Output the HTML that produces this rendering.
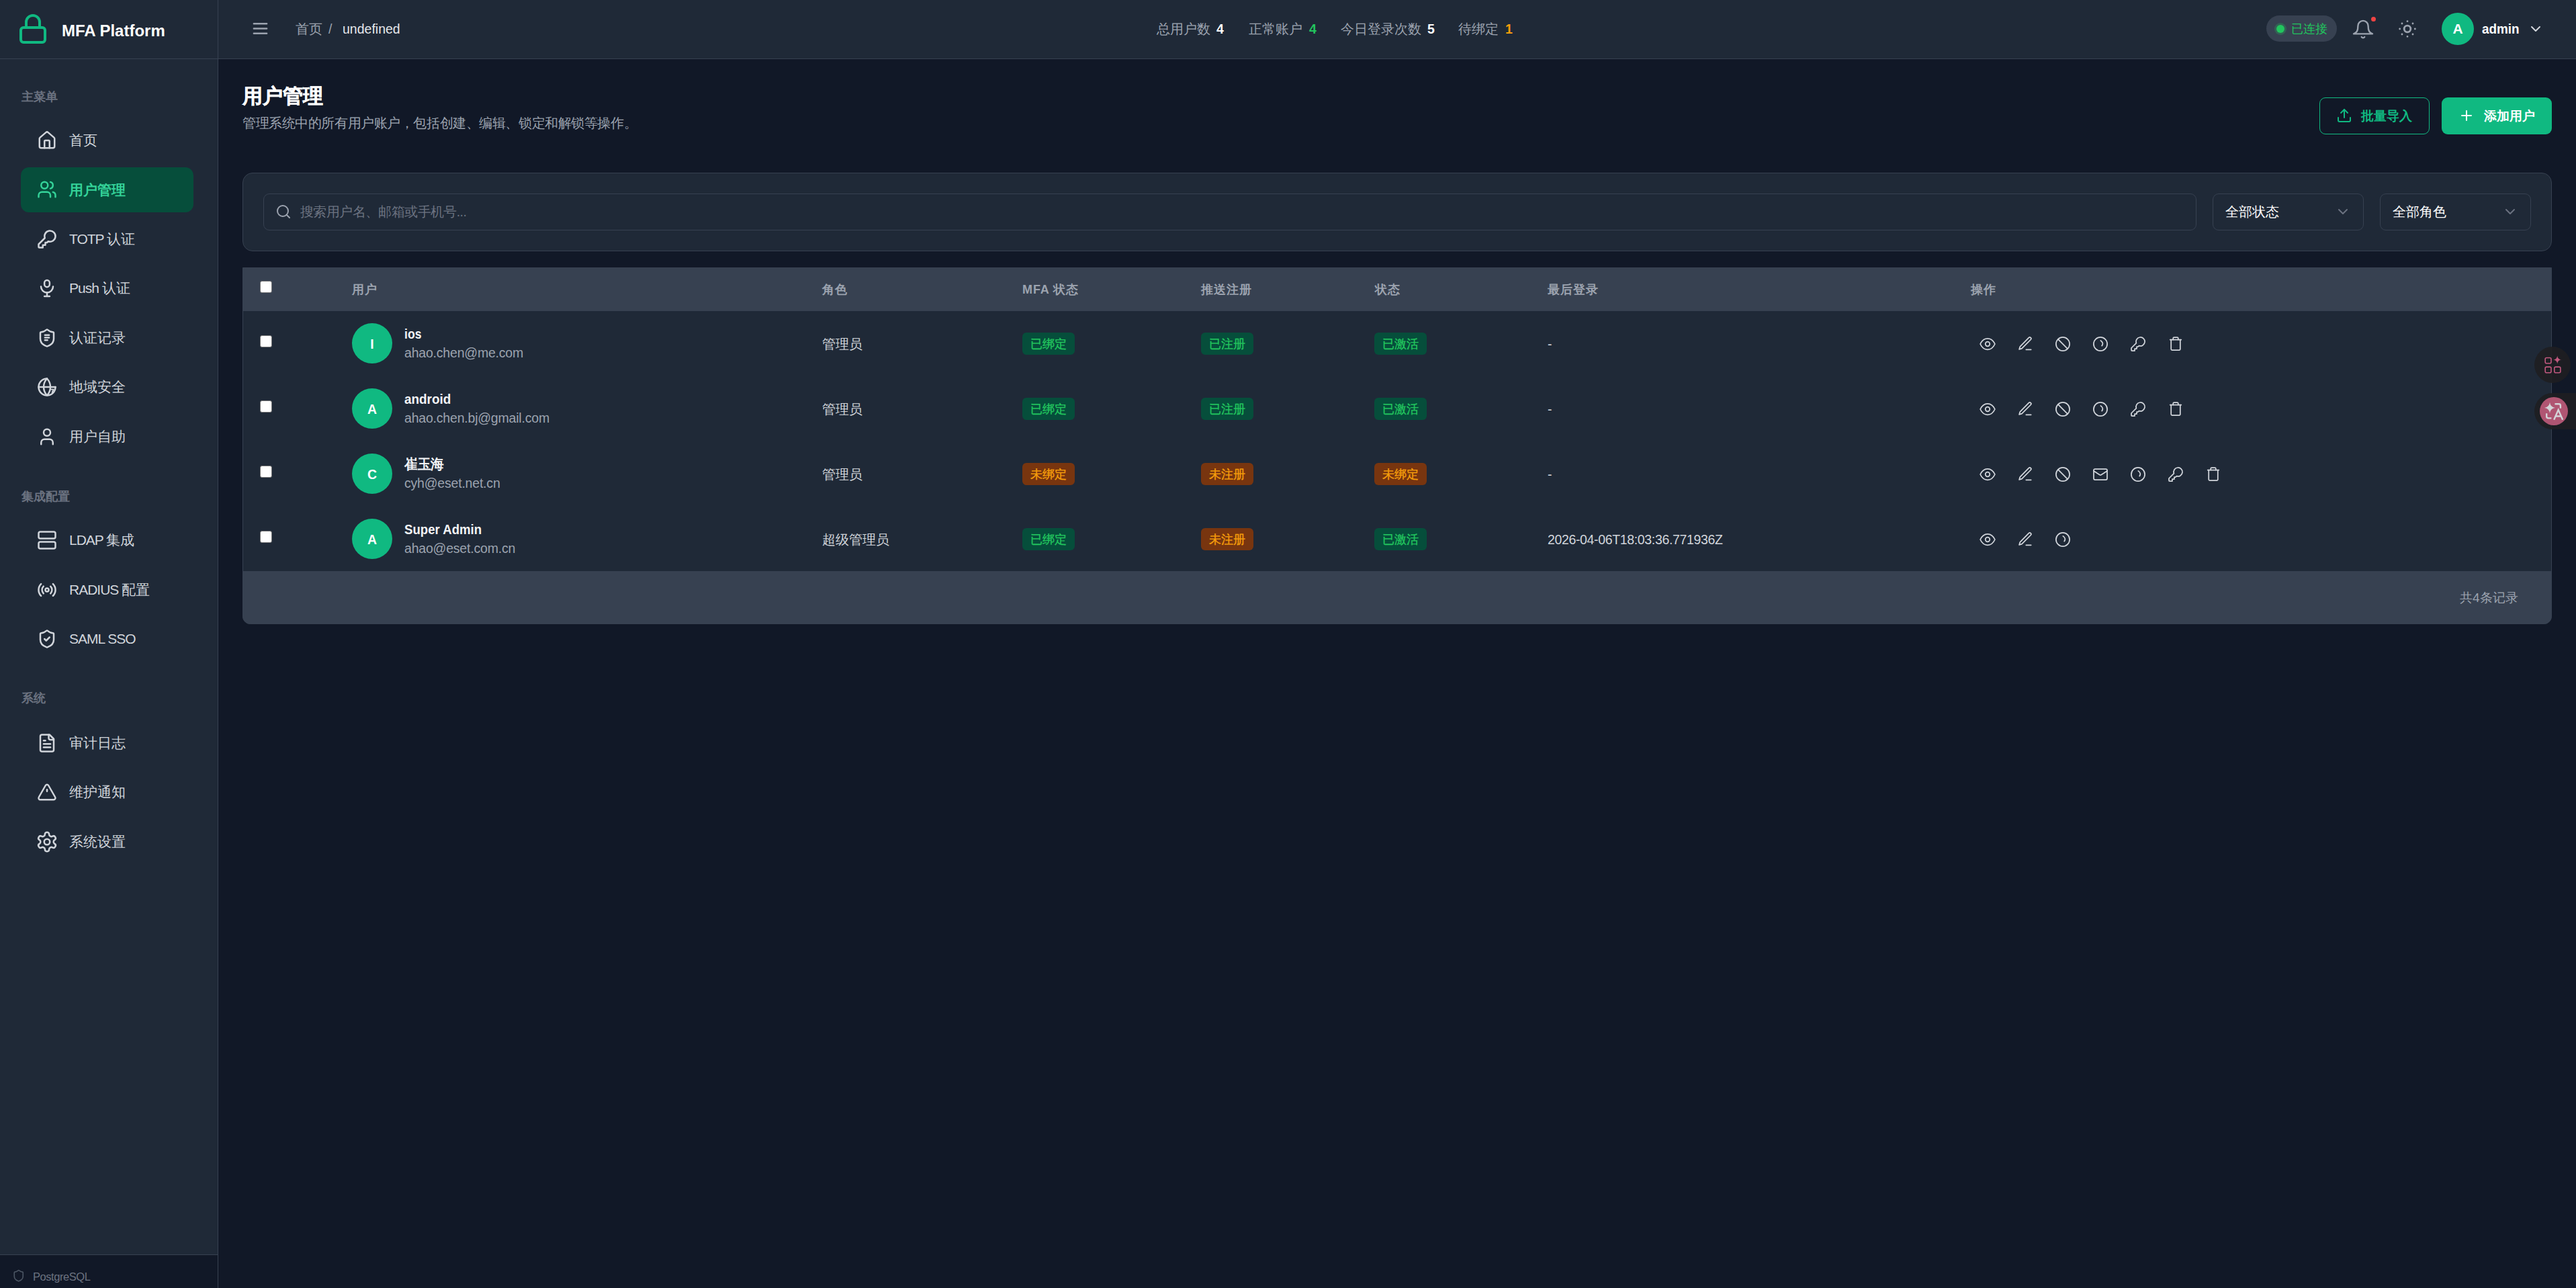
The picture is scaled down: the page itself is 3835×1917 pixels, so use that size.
<!DOCTYPE html>
<html><head><meta charset="utf-8">
<style>
*{box-sizing:border-box;margin:0;padding:0}
html,body{width:3835px;height:1917px;overflow:hidden;background:#111827;font-family:"Liberation Sans",sans-serif;color:#d1d5db}
.abs{position:absolute;white-space:nowrap}
svg{display:block;overflow:visible}
</style></head>
<body>

<div class="abs" style="left:0;top:0;width:325px;height:1917px;background:#1f2937;border-right:1px solid #374151"></div>
<div class="abs" style="left:0;top:87px;width:3835px;height:1px;background:#374151"></div>
<div class="abs" style="left:325px;top:0;width:3510px;height:87px;background:#1f2937"></div>

<svg class="abs" style="left:25px;top:19px" width="48" height="48" viewBox="0 0 24 24" fill="none" stroke="#10b981" stroke-width="2" stroke-linecap="round" stroke-linejoin="round"><rect x="3" y="11" width="18" height="11" rx="2"/><path d="M7 11V7a5 5 0 0 1 10 0v4"/></svg>
<div class="abs" style="left:92px;top:31.5px;font-size:24px;line-height:28px;color:#ffffff;font-weight:bold;">MFA Platform</div>
<div class="abs" style="left:32px;top:134px;font-size:18px;line-height:20px;color:#6b7280;font-weight:bold;">主菜单</div>
<svg class="abs" style="left:55px;top:193.5px" width="30" height="30" viewBox="0 0 24 24" fill="none" stroke="#d1d5db" stroke-width="2" stroke-linecap="round" stroke-linejoin="round"><path d="M15 21v-8a1 1 0 0 0-1-1h-4a1 1 0 0 0-1 1v8"/><path d="M3 10a2 2 0 0 1 .709-1.528l7-5.999a2 2 0 0 1 2.582 0l7 5.999A2 2 0 0 1 21 10v9a2 2 0 0 1-2 2H5a2 2 0 0 1-2-2z"/></svg>
<div class="abs" style="left:103px;top:196.5px;font-size:21px;line-height:24px;color:#d1d5db;font-weight:normal;">首页</div>
<div class="abs" style="left:31px;top:248.5px;width:257px;height:67px;border-radius:12px;background:#064e3b"></div>
<svg class="abs" style="left:55px;top:267.0px" width="30" height="30" viewBox="0 0 24 24" fill="none" stroke="#34d399" stroke-width="2" stroke-linecap="round" stroke-linejoin="round"><path d="M16 21v-2a4 4 0 0 0-4-4H6a4 4 0 0 0-4 4v2"/><circle cx="9" cy="7" r="4"/><path d="M22 21v-2a4 4 0 0 0-3-3.87"/><path d="M16 3.13a4 4 0 0 1 0 7.75"/></svg>
<div class="abs" style="left:103px;top:271.0px;font-size:21px;line-height:24px;color:#34d399;font-weight:bold;">用户管理</div>
<svg class="abs" style="left:55px;top:340.5px" width="30" height="30" viewBox="0 0 24 24" fill="none" stroke="#d1d5db" stroke-width="2" stroke-linecap="round" stroke-linejoin="round"><path d="M2 18v3c0 .6.4 1 1 1h4v-3h3v-3h2l1.4-1.4a6.5 6.5 0 1 0-4-4Z"/></svg>
<div class="abs" style="left:103px;top:343.5px;font-size:21px;line-height:24px;color:#d1d5db;font-weight:normal;"><span style="letter-spacing:-1px">TOTP </span>认证</div>
<svg class="abs" style="left:55px;top:414.0px" width="30" height="30" viewBox="0 0 24 24" fill="none" stroke="#d1d5db" stroke-width="2" stroke-linecap="round" stroke-linejoin="round"><rect x="8.9" y="2.3" width="6.2" height="8.2" rx="3.1"/><path d="M4.8 10A7.2 7.2 0 0 0 19.2 10"/><path d="M12 17.2v4.4M8.9 21.6h6.2"/></svg>
<div class="abs" style="left:103px;top:417.0px;font-size:21px;line-height:24px;color:#d1d5db;font-weight:normal;"><span style="letter-spacing:-1px">Push </span>认证</div>
<svg class="abs" style="left:55px;top:487.5px" width="30" height="30" viewBox="0 0 24 24" fill="none" stroke="#d1d5db" stroke-width="2" stroke-linecap="round" stroke-linejoin="round"><path d="M20 13c0 5-3.5 7.5-7.66 8.95a1 1 0 0 1-.67-.01C7.5 20.5 4 18 4 13V6a1 1 0 0 1 1-1c2 0 4.5-1.2 6.24-2.72a1.17 1.17 0 0 1 1.52 0C14.51 3.81 17 5 19 5a1 1 0 0 1 1 1z"/><path d="M9.5 8.5h5M9.5 11.5h5M9.5 14.5h3"/></svg>
<div class="abs" style="left:103px;top:490.5px;font-size:21px;line-height:24px;color:#d1d5db;font-weight:normal;">认证记录</div>
<svg class="abs" style="left:55px;top:561.0px" width="30" height="30" viewBox="0 0 24 24" fill="none" stroke="#d1d5db" stroke-width="2" stroke-linecap="round" stroke-linejoin="round"><path d="M12 2A10 10 0 1 0 22 12"/><path d="M12 2a14.5 14.5 0 0 0 0 20 14.5 14.5 0 0 0 0-20"/><path d="M2 12h20"/><path d="M16.6 14.8h3.2l-1.8 3.6" stroke-width="1.4"/></svg>
<div class="abs" style="left:103px;top:564.0px;font-size:21px;line-height:24px;color:#d1d5db;font-weight:normal;">地域安全</div>
<svg class="abs" style="left:55px;top:634.5px" width="30" height="30" viewBox="0 0 24 24" fill="none" stroke="#d1d5db" stroke-width="2" stroke-linecap="round" stroke-linejoin="round"><path d="M19 21v-2a4 4 0 0 0-4-4H9a4 4 0 0 0-4 4v2"/><circle cx="12" cy="7" r="4"/></svg>
<div class="abs" style="left:103px;top:637.5px;font-size:21px;line-height:24px;color:#d1d5db;font-weight:normal;">用户自助</div>
<div class="abs" style="left:32px;top:728.5px;font-size:18px;line-height:20px;color:#6b7280;font-weight:bold;">集成配置</div>
<svg class="abs" style="left:55px;top:789.0px" width="30" height="30" viewBox="0 0 24 24" fill="none" stroke="#d1d5db" stroke-width="2" stroke-linecap="round" stroke-linejoin="round"><rect x="2" y="2" width="20" height="8" rx="2"/><rect x="2" y="14" width="20" height="8" rx="2"/></svg>
<div class="abs" style="left:103px;top:792.0px;font-size:21px;line-height:24px;color:#d1d5db;font-weight:normal;"><span style="letter-spacing:-1px">LDAP </span>集成</div>
<svg class="abs" style="left:55px;top:862.5px" width="30" height="30" viewBox="0 0 24 24" fill="none" stroke="#d1d5db" stroke-width="2" stroke-linecap="round" stroke-linejoin="round"><path d="M4.9 19.1C1 15.2 1 8.8 4.9 4.9"/><path d="M7.8 16.2c-2.3-2.3-2.3-6.1 0-8.5"/><circle cx="12" cy="12" r="2"/><path d="M16.2 7.8c2.3 2.3 2.3 6.1 0 8.5"/><path d="M19.1 4.9C23 8.8 23 15.1 19.1 19"/></svg>
<div class="abs" style="left:103px;top:865.5px;font-size:21px;line-height:24px;color:#d1d5db;font-weight:normal;"><span style="letter-spacing:-1px">RADIUS </span>配置</div>
<svg class="abs" style="left:55px;top:936.0px" width="30" height="30" viewBox="0 0 24 24" fill="none" stroke="#d1d5db" stroke-width="2" stroke-linecap="round" stroke-linejoin="round"><path d="M20 13c0 5-3.5 7.5-7.66 8.95a1 1 0 0 1-.67-.01C7.5 20.5 4 18 4 13V6a1 1 0 0 1 1-1c2 0 4.5-1.2 6.24-2.72a1.17 1.17 0 0 1 1.52 0C14.51 3.81 17 5 19 5a1 1 0 0 1 1 1z"/><path d="m9 12 2 2 4-4"/></svg>
<div class="abs" style="left:103px;top:939.0px;font-size:21px;line-height:24px;color:#d1d5db;font-weight:normal;"><span style="letter-spacing:-1px">SAML SSO</span></div>
<div class="abs" style="left:32px;top:1029px;font-size:18px;line-height:20px;color:#6b7280;font-weight:bold;">系统</div>
<svg class="abs" style="left:55px;top:1090.5px" width="30" height="30" viewBox="0 0 24 24" fill="none" stroke="#d1d5db" stroke-width="2" stroke-linecap="round" stroke-linejoin="round"><path d="M15 2H6a2 2 0 0 0-2 2v16a2 2 0 0 0 2 2h12a2 2 0 0 0 2-2V7Z"/><path d="M14 2v4a2 2 0 0 0 2 2h4"/><path d="M10 9H8"/><path d="M16 13H8"/><path d="M16 17H8"/></svg>
<div class="abs" style="left:103px;top:1093.5px;font-size:21px;line-height:24px;color:#d1d5db;font-weight:normal;">审计日志</div>
<svg class="abs" style="left:55px;top:1164.0px" width="30" height="30" viewBox="0 0 24 24" fill="none" stroke="#d1d5db" stroke-width="2" stroke-linecap="round" stroke-linejoin="round"><path d="m21.73 18-8-14a2 2 0 0 0-3.48 0l-8 14A2 2 0 0 0 4 21h16a2 2 0 0 0 1.73-3"/><path d="M12 9v2"/></svg>
<div class="abs" style="left:103px;top:1167.0px;font-size:21px;line-height:24px;color:#d1d5db;font-weight:normal;">维护通知</div>
<svg class="abs" style="left:53px;top:1235.5px" width="34" height="34" viewBox="0 0 24 24" fill="none" stroke="#d1d5db" stroke-width="1.8" stroke-linecap="round" stroke-linejoin="round"><path d="M12.22 2h-.44a2 2 0 0 0-2 2v.18a2 2 0 0 1-1 1.73l-.43.25a2 2 0 0 1-2 0l-.15-.08a2 2 0 0 0-2.73.73l-.22.38a2 2 0 0 0 .73 2.73l.15.1a2 2 0 0 1 1 1.72v.51a2 2 0 0 1-1 1.74l-.15.09a2 2 0 0 0-.73 2.73l.22.38a2 2 0 0 0 2.73.73l.15-.08a2 2 0 0 1 2 0l.43.25a2 2 0 0 1 1 1.73V20a2 2 0 0 0 2 2h.44a2 2 0 0 0 2-2v-.18a2 2 0 0 1 1-1.73l.43-.25a2 2 0 0 1 2 0l.15.08a2 2 0 0 0 2.73-.73l.22-.39a2 2 0 0 0-.73-2.73l-.15-.08a2 2 0 0 1-1-1.74v-.5a2 2 0 0 1 1-1.74l.15-.09a2 2 0 0 0 .73-2.73l-.22-.38a2 2 0 0 0-2.73-.73l-.15.08a2 2 0 0 1-2 0l-.43-.25a2 2 0 0 1-1-1.73V4a2 2 0 0 0-2-2z"/><circle cx="12" cy="12" r="3"/></svg>
<div class="abs" style="left:103px;top:1240.5px;font-size:21px;line-height:24px;color:#d1d5db;font-weight:normal;">系统设置</div>
<div class="abs" style="left:0;top:1867px;width:324px;height:50px;background:#111827;border-top:1px solid #374151"></div>
<svg class="abs" style="left:18px;top:1889px" width="19.5" height="19.5" viewBox="0 0 24 24" fill="none" stroke="#4b5563" stroke-width="2" stroke-linecap="round" stroke-linejoin="round"><path d="M20 13c0 5-3.5 7.5-7.66 8.95a1 1 0 0 1-.67-.01C7.5 20.5 4 18 4 13V6a1 1 0 0 1 1-1c2 0 4.5-1.2 6.24-2.72a1.17 1.17 0 0 1 1.52 0C14.51 3.81 17 5 19 5a1 1 0 0 1 1 1z"/></svg>
<div class="abs" style="left:49px;top:1889px;font-size:16.5px;line-height:22px;color:#6b7280;font-weight:normal;letter-spacing:-0.45px">PostgreSQL</div>
<svg class="abs" style="left:373px;top:28px" width="29" height="29" viewBox="0 0 24 24" fill="none" stroke="#9ca3af" stroke-width="2" stroke-linecap="round" stroke-linejoin="round"><path d="M4 6h16M4 12h16M4 18h16"/></svg>
<div class="abs" style="left:440px;top:32px;font-size:19.5px;line-height:22px;color:#9ca3af;font-weight:normal;">首页</div>
<div class="abs" style="left:489px;top:32px;font-size:19.5px;line-height:22px;color:#9ca3af;font-weight:normal;">/</div>
<div class="abs" style="left:510px;top:32px;font-size:19.5px;line-height:22px;color:#e5e7eb;font-weight:normal;">undefined</div>
<div class="abs" style="left:1722px;top:32px;font-size:19.5px;line-height:22px;color:#9ca3af;font-weight:normal;">总用户数</div>
<div class="abs" style="left:1811px;top:32px;font-size:19.5px;line-height:22px;color:#ffffff;font-weight:bold;">4</div>
<div class="abs" style="left:1859px;top:32px;font-size:19.5px;line-height:22px;color:#9ca3af;font-weight:normal;">正常账户</div>
<div class="abs" style="left:1949px;top:32px;font-size:19.5px;line-height:22px;color:#22c55e;font-weight:bold;">4</div>
<div class="abs" style="left:1996px;top:32px;font-size:19.5px;line-height:22px;color:#9ca3af;font-weight:normal;">今日登录次数</div>
<div class="abs" style="left:2125px;top:32px;font-size:19.5px;line-height:22px;color:#ffffff;font-weight:bold;">5</div>
<div class="abs" style="left:2171px;top:32px;font-size:19.5px;line-height:22px;color:#9ca3af;font-weight:normal;">待绑定</div>
<div class="abs" style="left:2241px;top:32px;font-size:19.5px;line-height:22px;color:#f59e0b;font-weight:bold;">1</div>
<div class="abs" style="left:3374px;top:23px;width:105px;height:39px;border-radius:20px;background:#374151"></div>
<div class="abs" style="left:3386px;top:34px;width:18px;height:18px;border-radius:9px;background:rgba(34,197,94,0.25)"></div>
<div class="abs" style="left:3389px;top:37px;width:12px;height:12px;border-radius:6px;background:#22c55e"></div>
<div class="abs" style="left:3411px;top:32px;font-size:18px;line-height:22px;color:#22c55e;font-weight:normal;">已连接</div>
<svg class="abs" style="left:3502px;top:27px" width="32" height="32" viewBox="0 0 24 24" fill="none" stroke="#9ca3af" stroke-width="1.8" stroke-linecap="round" stroke-linejoin="round"><path d="M6.3 8.6a5.7 5.7 0 0 1 11.4 0c0 5.6 1.4 7.6 4.8 8.9H1.5c3.4-1.3 4.8-3.3 4.8-8.9"/><path d="M10.3 21a1.94 1.94 0 0 0 3.4 0"/></svg>
<div class="abs" style="left:3530px;top:25px;width:7px;height:7px;border-radius:4px;background:#ef4444"></div>
<svg class="abs" style="left:3567px;top:26px" width="34" height="34" viewBox="0 0 24 24" fill="none" stroke="#9ca3af" stroke-width="2" stroke-linecap="round" stroke-linejoin="round"><circle cx="12" cy="12" r="3.4"/><path d="M12 4h.01M20 12h.01M12 20h.01M4 12h.01M17.657 6.343h.01M17.657 17.657h.01M6.343 17.657h.01M6.343 6.343h.01"/></svg>
<div class="abs" style="left:3635px;top:19px;width:48px;height:48px;border-radius:24px;background:#10b981"></div>
<div class="abs" style="left:3635px;top:32px;font-size:21px;line-height:22px;color:#ffffff;font-weight:bold;width:48px;text-align:center">A</div>
<div class="abs" style="left:3695px;top:31px;font-size:21px;line-height:24px;color:#ffffff;font-weight:bold;transform:scaleX(0.9);transform-origin:0 0">admin</div>
<svg class="abs" style="left:3763px;top:31px" width="24" height="24" viewBox="0 0 24 24" fill="none" stroke="#d1d5db" stroke-width="2" stroke-linecap="round" stroke-linejoin="round"><path d="m6 9 6 6 6-6"/></svg>
<div class="abs" style="left:361px;top:126px;font-size:30px;line-height:34px;color:#ffffff;font-weight:bold;-webkit-text-stroke:0.5px #fff">用户管理</div>
<div class="abs" style="left:361px;top:172px;font-size:19.5px;line-height:22px;color:#9ca3af;font-weight:normal;letter-spacing:-0.43px">管理系统中的所有用户账户，包括创建、编辑、锁定和解锁等操作。</div>
<div class="abs" style="left:3453px;top:145px;width:164px;height:55px;border-radius:9px;border:1.5px solid #10b981"></div>
<svg class="abs" style="left:3478px;top:160px" width="24" height="24" viewBox="0 0 24 24" fill="none" stroke="#10b981" stroke-width="2" stroke-linecap="round" stroke-linejoin="round"><path d="M21 15v4a2 2 0 0 1-2 2H5a2 2 0 0 1-2-2v-4"/><path d="m17 8-5-5-5 5"/><path d="M12 3v12"/></svg>
<div class="abs" style="left:3515px;top:162px;font-size:18.75px;line-height:22px;color:#10b981;font-weight:bold;">批量导入</div>
<div class="abs" style="left:3635px;top:145px;width:164px;height:55px;border-radius:9px;background:#10b981"></div>
<svg class="abs" style="left:3660px;top:160px" width="24" height="24" viewBox="0 0 24 24" fill="none" stroke="#ffffff" stroke-width="2" stroke-linecap="round" stroke-linejoin="round"><path d="M5 12h14"/><path d="M12 5v14"/></svg>
<div class="abs" style="left:3698px;top:162px;font-size:18.75px;line-height:22px;color:#ffffff;font-weight:bold;">添加用户</div>
<div class="abs" style="left:361px;top:257px;width:3438px;height:117px;border-radius:15px;background:#1f2937;border:1px solid #374151"></div>
<div class="abs" style="left:392px;top:288px;width:2878px;height:55px;border-radius:9px;background:#1f2937;border:1px solid #374151"></div>
<svg class="abs" style="left:410px;top:303px" width="24" height="24" viewBox="0 0 24 24" fill="none" stroke="#9ca3af" stroke-width="2" stroke-linecap="round" stroke-linejoin="round"><circle cx="11" cy="11" r="8"/><path d="m21 21-4.3-4.3"/></svg>
<div class="abs" style="left:447px;top:304px;font-size:19.5px;line-height:22px;color:#6b7280;font-weight:normal;letter-spacing:-0.6px">搜索用户名、邮箱或手机号...</div>
<div class="abs" style="left:3294px;top:288px;width:225px;height:55px;border-radius:9px;background:#1f2937;border:1px solid #374151"></div>
<div class="abs" style="left:3313px;top:304px;font-size:19.5px;line-height:22px;color:#ffffff;font-weight:normal;">全部状态</div>
<svg class="abs" style="left:3476px;top:303px" width="24" height="24" viewBox="0 0 24 24" fill="none" stroke="#6b7280" stroke-width="2" stroke-linecap="round" stroke-linejoin="round"><path d="m6 9 6 6 6-6"/></svg>
<div class="abs" style="left:3543px;top:288px;width:225px;height:55px;border-radius:9px;background:#1f2937;border:1px solid #374151"></div>
<div class="abs" style="left:3562px;top:304px;font-size:19.5px;line-height:22px;color:#ffffff;font-weight:normal;">全部角色</div>
<svg class="abs" style="left:3725px;top:303px" width="24" height="24" viewBox="0 0 24 24" fill="none" stroke="#6b7280" stroke-width="2" stroke-linecap="round" stroke-linejoin="round"><path d="m6 9 6 6 6-6"/></svg>
<div class="abs" style="left:361px;top:398px;width:3438px;height:531px;border-radius:0 0 12px 12px;background:#1f2937;border:1px solid #374151"></div>
<div class="abs" style="left:361px;top:398px;width:3438px;height:65px;background:#374151;border-radius:2px 2px 0 0"></div>
<div class="abs" style="left:361px;top:850px;width:3438px;height:79px;background:#374151;border-radius:0 0 12px 12px"></div>
<div class="abs" style="left:387px;top:418px;width:18px;height:18px;border-radius:3px;background:#ffffff;border:1px solid #767676"></div>
<div class="abs" style="left:524px;top:419.5px;font-size:18px;line-height:22px;color:#9ca3af;font-weight:bold;letter-spacing:0.9px">用户</div>
<div class="abs" style="left:1224px;top:419.5px;font-size:18px;line-height:22px;color:#9ca3af;font-weight:bold;letter-spacing:0.9px">角色</div>
<div class="abs" style="left:1522px;top:419.5px;font-size:18px;line-height:22px;color:#9ca3af;font-weight:bold;letter-spacing:0.9px">MFA 状态</div>
<div class="abs" style="left:1788px;top:419.5px;font-size:18px;line-height:22px;color:#9ca3af;font-weight:bold;letter-spacing:0.9px">推送注册</div>
<div class="abs" style="left:2047px;top:419.5px;font-size:18px;line-height:22px;color:#9ca3af;font-weight:bold;letter-spacing:0.9px">状态</div>
<div class="abs" style="left:2304px;top:419.5px;font-size:18px;line-height:22px;color:#9ca3af;font-weight:bold;letter-spacing:0.9px">最后登录</div>
<div class="abs" style="left:2934px;top:419.5px;font-size:18px;line-height:22px;color:#9ca3af;font-weight:bold;letter-spacing:0.9px">操作</div>
<div class="abs" style="left:387px;top:498.5px;width:18px;height:18px;border-radius:3px;background:#ffffff;border:1px solid #767676"></div>
<div class="abs" style="left:524px;top:480.8px;width:60px;height:60px;border-radius:30px;background:#10b981"></div>
<div class="abs" style="left:524px;top:500.5px;font-size:19.5px;line-height:22px;color:#ffffff;font-weight:bold;width:60px;text-align:center">I</div>
<div class="abs" style="left:602px;top:484.5px;font-size:21px;line-height:24px;color:#f3f4f6;font-weight:bold;transform:scaleX(0.84);transform-origin:0 0">ios</div>
<div class="abs" style="left:602px;top:513.5px;font-size:19.5px;line-height:22px;color:#9ca3af;font-weight:normal;letter-spacing:-0.2px">ahao.chen@me.com</div>
<div class="abs" style="left:1224px;top:500.5px;font-size:19.5px;line-height:22px;color:#d1d5db;font-weight:normal;">管理员</div>
<div class="abs" style="left:1522px;top:495.0px;width:78px;height:33px;border-radius:6px;background:#064e3b"></div>
<div class="abs" style="left:1522px;top:501.0px;font-size:18px;line-height:22px;color:#22c55e;font-weight:normal;width:78px;text-align:center;-webkit-text-stroke:0.35px #22c55e">已绑定</div>
<div class="abs" style="left:1788px;top:495.0px;width:78px;height:33px;border-radius:6px;background:#064e3b"></div>
<div class="abs" style="left:1788px;top:501.0px;font-size:18px;line-height:22px;color:#22c55e;font-weight:normal;width:78px;text-align:center;-webkit-text-stroke:0.35px #22c55e">已注册</div>
<div class="abs" style="left:2046px;top:495.0px;width:78px;height:33px;border-radius:6px;background:#064e3b"></div>
<div class="abs" style="left:2046px;top:501.0px;font-size:18px;line-height:22px;color:#22c55e;font-weight:normal;width:78px;text-align:center;-webkit-text-stroke:0.35px #22c55e">已激活</div>
<div class="abs" style="left:2304px;top:500.5px;font-size:19.5px;line-height:22px;color:#d1d5db;font-weight:normal;letter-spacing:-0.35px">-</div>
<svg class="abs" style="left:2947px;top:499.5px" width="24" height="24" viewBox="0 0 24 24" fill="none" stroke="#d1d5db" stroke-width="1.75" stroke-linecap="round" stroke-linejoin="round"><path d="M1.1 12C3.6 6.6 7.4 3.75 12 3.75S20.4 6.6 22.9 12C20.4 17.4 16.6 20.25 12 20.25S3.6 17.4 1.1 12Z"/><circle cx="12" cy="12" r="3.3"/></svg>
<svg class="abs" style="left:3003px;top:499.5px" width="24" height="24" viewBox="0 0 24 24" fill="none" stroke="#d1d5db" stroke-width="1.75" stroke-linecap="round" stroke-linejoin="round"><path d="M17.3 2.6a2.05 2.05 0 0 1 2.9 2.9L7.3 18.4a1.8 1.8 0 0 1-.8.5l-3.4 1 1-3.4a1.8 1.8 0 0 1 .5-.8z"/><path d="M13.3 20.3h7.4"/></svg>
<svg class="abs" style="left:3059px;top:499.5px" width="24" height="24" viewBox="0 0 24 24" fill="none" stroke="#d1d5db" stroke-width="1.75" stroke-linecap="round" stroke-linejoin="round"><circle cx="12" cy="12" r="10.1"/><path d="M4.9 4.9l14.2 14.2"/></svg>
<svg class="abs" style="left:3115px;top:499.5px" width="24" height="24" viewBox="0 0 24 24" fill="none" stroke="#d1d5db" stroke-width="1.75" stroke-linecap="round" stroke-linejoin="round"><circle cx="12" cy="12" r="10.1"/><path d="M12.3 6.9Q17.3 10.5 14.2 14.6"/></svg>
<svg class="abs" style="left:3171px;top:499.5px" width="24" height="24" viewBox="0 0 24 24" fill="none" stroke="#d1d5db" stroke-width="1.75" stroke-linecap="round" stroke-linejoin="round"><path d="M2 18v3c0 .6.4 1 1 1h4v-3h3v-3h2l1.4-1.4a6.5 6.5 0 1 0-4-4Z"/></svg>
<svg class="abs" style="left:3227px;top:499.5px" width="24" height="24" viewBox="0 0 24 24" fill="none" stroke="#d1d5db" stroke-width="1.75" stroke-linecap="round" stroke-linejoin="round"><path d="M3.7 5.6h16.6"/><path d="M18.8 5.6v14a1.6 1.6 0 0 1-1.6 1.6H6.8a1.6 1.6 0 0 1-1.6-1.6v-14"/><path d="M8.2 5.6V3.6A1.6 1.6 0 0 1 9.8 2h4.4a1.6 1.6 0 0 1 1.6 1.6v2"/></svg>
<div class="abs" style="left:387px;top:595.5px;width:18px;height:18px;border-radius:3px;background:#ffffff;border:1px solid #767676"></div>
<div class="abs" style="left:524px;top:577.8px;width:60px;height:60px;border-radius:30px;background:#10b981"></div>
<div class="abs" style="left:524px;top:597.5px;font-size:19.5px;line-height:22px;color:#ffffff;font-weight:bold;width:60px;text-align:center">A</div>
<div class="abs" style="left:602px;top:581.5px;font-size:21px;line-height:24px;color:#f3f4f6;font-weight:bold;transform:scaleX(0.9);transform-origin:0 0">android</div>
<div class="abs" style="left:602px;top:610.5px;font-size:19.5px;line-height:22px;color:#9ca3af;font-weight:normal;letter-spacing:-0.2px">ahao.chen.bj@gmail.com</div>
<div class="abs" style="left:1224px;top:597.5px;font-size:19.5px;line-height:22px;color:#d1d5db;font-weight:normal;">管理员</div>
<div class="abs" style="left:1522px;top:592.0px;width:78px;height:33px;border-radius:6px;background:#064e3b"></div>
<div class="abs" style="left:1522px;top:598.0px;font-size:18px;line-height:22px;color:#22c55e;font-weight:normal;width:78px;text-align:center;-webkit-text-stroke:0.35px #22c55e">已绑定</div>
<div class="abs" style="left:1788px;top:592.0px;width:78px;height:33px;border-radius:6px;background:#064e3b"></div>
<div class="abs" style="left:1788px;top:598.0px;font-size:18px;line-height:22px;color:#22c55e;font-weight:normal;width:78px;text-align:center;-webkit-text-stroke:0.35px #22c55e">已注册</div>
<div class="abs" style="left:2046px;top:592.0px;width:78px;height:33px;border-radius:6px;background:#064e3b"></div>
<div class="abs" style="left:2046px;top:598.0px;font-size:18px;line-height:22px;color:#22c55e;font-weight:normal;width:78px;text-align:center;-webkit-text-stroke:0.35px #22c55e">已激活</div>
<div class="abs" style="left:2304px;top:597.5px;font-size:19.5px;line-height:22px;color:#d1d5db;font-weight:normal;letter-spacing:-0.35px">-</div>
<svg class="abs" style="left:2947px;top:596.5px" width="24" height="24" viewBox="0 0 24 24" fill="none" stroke="#d1d5db" stroke-width="1.75" stroke-linecap="round" stroke-linejoin="round"><path d="M1.1 12C3.6 6.6 7.4 3.75 12 3.75S20.4 6.6 22.9 12C20.4 17.4 16.6 20.25 12 20.25S3.6 17.4 1.1 12Z"/><circle cx="12" cy="12" r="3.3"/></svg>
<svg class="abs" style="left:3003px;top:596.5px" width="24" height="24" viewBox="0 0 24 24" fill="none" stroke="#d1d5db" stroke-width="1.75" stroke-linecap="round" stroke-linejoin="round"><path d="M17.3 2.6a2.05 2.05 0 0 1 2.9 2.9L7.3 18.4a1.8 1.8 0 0 1-.8.5l-3.4 1 1-3.4a1.8 1.8 0 0 1 .5-.8z"/><path d="M13.3 20.3h7.4"/></svg>
<svg class="abs" style="left:3059px;top:596.5px" width="24" height="24" viewBox="0 0 24 24" fill="none" stroke="#d1d5db" stroke-width="1.75" stroke-linecap="round" stroke-linejoin="round"><circle cx="12" cy="12" r="10.1"/><path d="M4.9 4.9l14.2 14.2"/></svg>
<svg class="abs" style="left:3115px;top:596.5px" width="24" height="24" viewBox="0 0 24 24" fill="none" stroke="#d1d5db" stroke-width="1.75" stroke-linecap="round" stroke-linejoin="round"><circle cx="12" cy="12" r="10.1"/><path d="M12.3 6.9Q17.3 10.5 14.2 14.6"/></svg>
<svg class="abs" style="left:3171px;top:596.5px" width="24" height="24" viewBox="0 0 24 24" fill="none" stroke="#d1d5db" stroke-width="1.75" stroke-linecap="round" stroke-linejoin="round"><path d="M2 18v3c0 .6.4 1 1 1h4v-3h3v-3h2l1.4-1.4a6.5 6.5 0 1 0-4-4Z"/></svg>
<svg class="abs" style="left:3227px;top:596.5px" width="24" height="24" viewBox="0 0 24 24" fill="none" stroke="#d1d5db" stroke-width="1.75" stroke-linecap="round" stroke-linejoin="round"><path d="M3.7 5.6h16.6"/><path d="M18.8 5.6v14a1.6 1.6 0 0 1-1.6 1.6H6.8a1.6 1.6 0 0 1-1.6-1.6v-14"/><path d="M8.2 5.6V3.6A1.6 1.6 0 0 1 9.8 2h4.4a1.6 1.6 0 0 1 1.6 1.6v2"/></svg>
<div class="abs" style="left:387px;top:692.5px;width:18px;height:18px;border-radius:3px;background:#ffffff;border:1px solid #767676"></div>
<div class="abs" style="left:524px;top:674.8px;width:60px;height:60px;border-radius:30px;background:#10b981"></div>
<div class="abs" style="left:524px;top:694.5px;font-size:19.5px;line-height:22px;color:#ffffff;font-weight:bold;width:60px;text-align:center">C</div>
<div class="abs" style="left:602px;top:678.5px;font-size:21px;line-height:24px;color:#f3f4f6;font-weight:bold;transform:scaleX(0.94);transform-origin:0 0">崔玉海</div>
<div class="abs" style="left:602px;top:707.5px;font-size:19.5px;line-height:22px;color:#9ca3af;font-weight:normal;letter-spacing:-0.2px">cyh@eset.net.cn</div>
<div class="abs" style="left:1224px;top:694.5px;font-size:19.5px;line-height:22px;color:#d1d5db;font-weight:normal;">管理员</div>
<div class="abs" style="left:1522px;top:689.0px;width:78px;height:33px;border-radius:6px;background:#78350f"></div>
<div class="abs" style="left:1522px;top:695.0px;font-size:18px;line-height:22px;color:#f59e0b;font-weight:normal;width:78px;text-align:center;-webkit-text-stroke:0.35px #f59e0b">未绑定</div>
<div class="abs" style="left:1788px;top:689.0px;width:78px;height:33px;border-radius:6px;background:#78350f"></div>
<div class="abs" style="left:1788px;top:695.0px;font-size:18px;line-height:22px;color:#f59e0b;font-weight:normal;width:78px;text-align:center;-webkit-text-stroke:0.35px #f59e0b">未注册</div>
<div class="abs" style="left:2046px;top:689.0px;width:78px;height:33px;border-radius:6px;background:#78350f"></div>
<div class="abs" style="left:2046px;top:695.0px;font-size:18px;line-height:22px;color:#f59e0b;font-weight:normal;width:78px;text-align:center;-webkit-text-stroke:0.35px #f59e0b">未绑定</div>
<div class="abs" style="left:2304px;top:694.5px;font-size:19.5px;line-height:22px;color:#d1d5db;font-weight:normal;letter-spacing:-0.35px">-</div>
<svg class="abs" style="left:2947px;top:693.5px" width="24" height="24" viewBox="0 0 24 24" fill="none" stroke="#d1d5db" stroke-width="1.75" stroke-linecap="round" stroke-linejoin="round"><path d="M1.1 12C3.6 6.6 7.4 3.75 12 3.75S20.4 6.6 22.9 12C20.4 17.4 16.6 20.25 12 20.25S3.6 17.4 1.1 12Z"/><circle cx="12" cy="12" r="3.3"/></svg>
<svg class="abs" style="left:3003px;top:693.5px" width="24" height="24" viewBox="0 0 24 24" fill="none" stroke="#d1d5db" stroke-width="1.75" stroke-linecap="round" stroke-linejoin="round"><path d="M17.3 2.6a2.05 2.05 0 0 1 2.9 2.9L7.3 18.4a1.8 1.8 0 0 1-.8.5l-3.4 1 1-3.4a1.8 1.8 0 0 1 .5-.8z"/><path d="M13.3 20.3h7.4"/></svg>
<svg class="abs" style="left:3059px;top:693.5px" width="24" height="24" viewBox="0 0 24 24" fill="none" stroke="#d1d5db" stroke-width="1.75" stroke-linecap="round" stroke-linejoin="round"><circle cx="12" cy="12" r="10.1"/><path d="M4.9 4.9l14.2 14.2"/></svg>
<svg class="abs" style="left:3115px;top:693.5px" width="24" height="24" viewBox="0 0 24 24" fill="none" stroke="#d1d5db" stroke-width="1.75" stroke-linecap="round" stroke-linejoin="round"><rect x="2" y="4" width="20" height="16" rx="2"/><path d="m22 7-8.97 5.7a1.94 1.94 0 0 1-2.06 0L2 7"/></svg>
<svg class="abs" style="left:3171px;top:693.5px" width="24" height="24" viewBox="0 0 24 24" fill="none" stroke="#d1d5db" stroke-width="1.75" stroke-linecap="round" stroke-linejoin="round"><circle cx="12" cy="12" r="10.1"/><path d="M12.3 6.9Q17.3 10.5 14.2 14.6"/></svg>
<svg class="abs" style="left:3227px;top:693.5px" width="24" height="24" viewBox="0 0 24 24" fill="none" stroke="#d1d5db" stroke-width="1.75" stroke-linecap="round" stroke-linejoin="round"><path d="M2 18v3c0 .6.4 1 1 1h4v-3h3v-3h2l1.4-1.4a6.5 6.5 0 1 0-4-4Z"/></svg>
<svg class="abs" style="left:3283px;top:693.5px" width="24" height="24" viewBox="0 0 24 24" fill="none" stroke="#d1d5db" stroke-width="1.75" stroke-linecap="round" stroke-linejoin="round"><path d="M3.7 5.6h16.6"/><path d="M18.8 5.6v14a1.6 1.6 0 0 1-1.6 1.6H6.8a1.6 1.6 0 0 1-1.6-1.6v-14"/><path d="M8.2 5.6V3.6A1.6 1.6 0 0 1 9.8 2h4.4a1.6 1.6 0 0 1 1.6 1.6v2"/></svg>
<div class="abs" style="left:387px;top:789.5px;width:18px;height:18px;border-radius:3px;background:#ffffff;border:1px solid #767676"></div>
<div class="abs" style="left:524px;top:771.8px;width:60px;height:60px;border-radius:30px;background:#10b981"></div>
<div class="abs" style="left:524px;top:791.5px;font-size:19.5px;line-height:22px;color:#ffffff;font-weight:bold;width:60px;text-align:center">A</div>
<div class="abs" style="left:602px;top:775.5px;font-size:21px;line-height:24px;color:#f3f4f6;font-weight:bold;transform:scaleX(0.886);transform-origin:0 0">Super Admin</div>
<div class="abs" style="left:602px;top:804.5px;font-size:19.5px;line-height:22px;color:#9ca3af;font-weight:normal;letter-spacing:-0.2px">ahao@eset.com.cn</div>
<div class="abs" style="left:1224px;top:791.5px;font-size:19.5px;line-height:22px;color:#d1d5db;font-weight:normal;">超级管理员</div>
<div class="abs" style="left:1522px;top:786.0px;width:78px;height:33px;border-radius:6px;background:#064e3b"></div>
<div class="abs" style="left:1522px;top:792.0px;font-size:18px;line-height:22px;color:#22c55e;font-weight:normal;width:78px;text-align:center;-webkit-text-stroke:0.35px #22c55e">已绑定</div>
<div class="abs" style="left:1788px;top:786.0px;width:78px;height:33px;border-radius:6px;background:#78350f"></div>
<div class="abs" style="left:1788px;top:792.0px;font-size:18px;line-height:22px;color:#f59e0b;font-weight:normal;width:78px;text-align:center;-webkit-text-stroke:0.35px #f59e0b">未注册</div>
<div class="abs" style="left:2046px;top:786.0px;width:78px;height:33px;border-radius:6px;background:#064e3b"></div>
<div class="abs" style="left:2046px;top:792.0px;font-size:18px;line-height:22px;color:#22c55e;font-weight:normal;width:78px;text-align:center;-webkit-text-stroke:0.35px #22c55e">已激活</div>
<div class="abs" style="left:2304px;top:791.5px;font-size:19.5px;line-height:22px;color:#d1d5db;font-weight:normal;letter-spacing:-0.35px">2026-04-06T18:03:36.771936Z</div>
<svg class="abs" style="left:2947px;top:790.5px" width="24" height="24" viewBox="0 0 24 24" fill="none" stroke="#d1d5db" stroke-width="1.75" stroke-linecap="round" stroke-linejoin="round"><path d="M1.1 12C3.6 6.6 7.4 3.75 12 3.75S20.4 6.6 22.9 12C20.4 17.4 16.6 20.25 12 20.25S3.6 17.4 1.1 12Z"/><circle cx="12" cy="12" r="3.3"/></svg>
<svg class="abs" style="left:3003px;top:790.5px" width="24" height="24" viewBox="0 0 24 24" fill="none" stroke="#d1d5db" stroke-width="1.75" stroke-linecap="round" stroke-linejoin="round"><path d="M17.3 2.6a2.05 2.05 0 0 1 2.9 2.9L7.3 18.4a1.8 1.8 0 0 1-.8.5l-3.4 1 1-3.4a1.8 1.8 0 0 1 .5-.8z"/><path d="M13.3 20.3h7.4"/></svg>
<svg class="abs" style="left:3059px;top:790.5px" width="24" height="24" viewBox="0 0 24 24" fill="none" stroke="#d1d5db" stroke-width="1.75" stroke-linecap="round" stroke-linejoin="round"><circle cx="12" cy="12" r="10.1"/><path d="M12.3 6.9Q17.3 10.5 14.2 14.6"/></svg>
<div class="abs" style="left:3662px;top:879px;font-size:19px;line-height:22px;color:#9ca3af;font-weight:normal;">共4条记录</div>
<div class="abs" style="left:3773px;top:516px;width:54px;height:54px;border-radius:27px;background:rgba(30,30,34,0.92)"></div>
<svg class="abs" style="left:3787px;top:530px" width="26" height="26" viewBox="0 0 26 26" fill="none" stroke="#c0587e" stroke-width="1.6"><rect x="2.2" y="2.5" width="8.8" height="8.3" rx="2"/><rect x="2.2" y="16.1" width="8.8" height="8.6" rx="2"/><rect x="15.8" y="16.1" width="9.1" height="8.6" rx="2"/><path d="M20.2 -0.6Q20.8 4.8 26.2 5.4Q20.8 6 20.2 11.4Q19.6 6 14.2 5.4Q19.6 4.8 20.2 -0.6Z" fill="#c0587e" stroke="none"/></svg>
<div class="abs" style="left:3773px;top:585px;width:62px;height:54px;border-radius:27px 0 0 27px;background:rgba(30,30,34,0.92)"></div>
<div class="abs" style="left:3781px;top:591px;width:42px;height:42px;border-radius:21px;background:#b05572"></div>
<svg class="abs" style="left:3787px;top:597px" width="30" height="30" viewBox="0 0 30 30" fill="none" stroke="#d4d4d8" stroke-width="2.4" stroke-linecap="butt"><path d="M9 1.8Q9.8 9.1 17 9.9Q9.8 10.7 9 18Q8.2 10.7 1 9.9Q8.2 9.1 9 1.8Z" fill="#d4d4d8" stroke="none"/><path d="M16.5 4.2h5.8a2.6 2.6 0 0 1 2.6 2.6v4"/><path d="M4.2 18.2v4.6a2.6 2.6 0 0 0 2.6 2.6h4.6"/><path d="M15.2 27.8l6.5-14.8 6.5 14.8M17.6 22.5h8.2"/></svg>
</body></html>
